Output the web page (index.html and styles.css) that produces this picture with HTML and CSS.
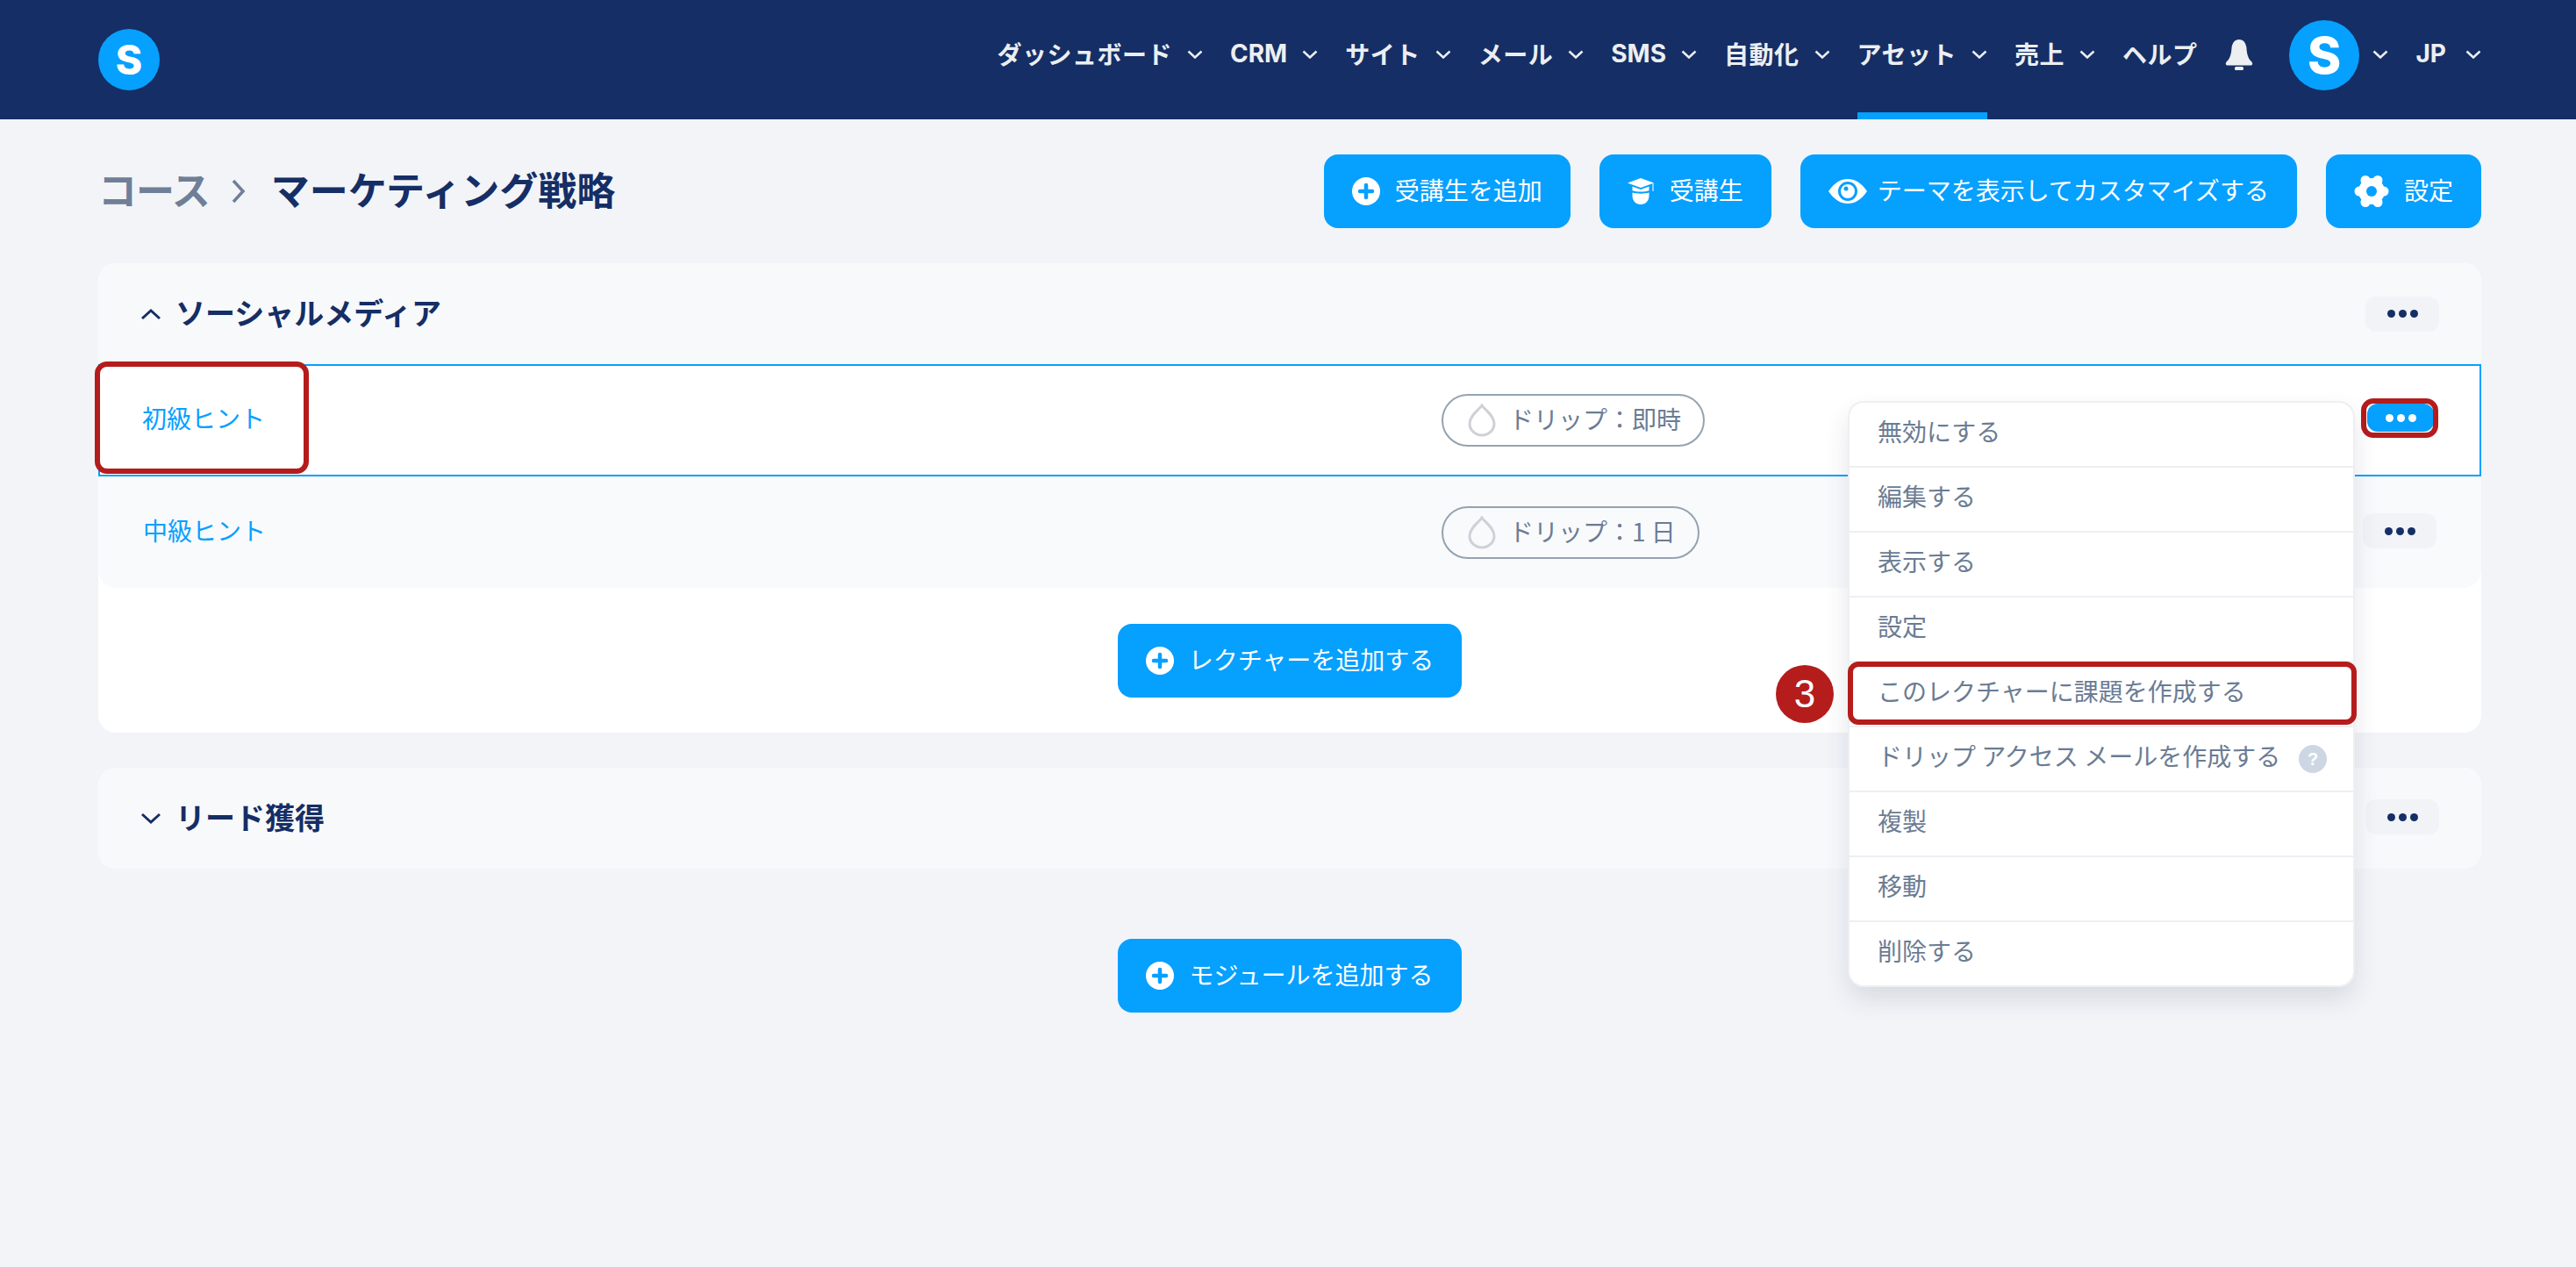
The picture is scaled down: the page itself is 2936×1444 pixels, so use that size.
FILE: index.html
```html
<!DOCTYPE html>
<html lang="ja">
<head>
  <meta charset="UTF-8">
  <title>マーケティング戦略</title>
  <link rel="stylesheet" href="styles.css">
</head>
<body>
  <!-- Top navigation -->
  <header class="topbar">
    <div class="logo">S</div>
    <nav class="nav">
      <a class="nav-item">ダッシュボード<svg class="chev" viewBox="0 0 18 10"><path d="M1.5 1.5 9 8.5l7.5-7"/></svg></a>
      <a class="nav-item nav-latin">CRM<svg class="chev" viewBox="0 0 18 10"><path d="M1.5 1.5 9 8.5l7.5-7"/></svg></a>
      <a class="nav-item">サイト<svg class="chev" viewBox="0 0 18 10"><path d="M1.5 1.5 9 8.5l7.5-7"/></svg></a>
      <a class="nav-item">メール<svg class="chev" viewBox="0 0 18 10"><path d="M1.5 1.5 9 8.5l7.5-7"/></svg></a>
      <a class="nav-item nav-latin">SMS<svg class="chev" viewBox="0 0 18 10"><path d="M1.5 1.5 9 8.5l7.5-7"/></svg></a>
      <a class="nav-item">自動化<svg class="chev" viewBox="0 0 18 10"><path d="M1.5 1.5 9 8.5l7.5-7"/></svg></a>
      <a class="nav-item active">アセット<svg class="chev" viewBox="0 0 18 10"><path d="M1.5 1.5 9 8.5l7.5-7"/></svg></a>
      <a class="nav-item">売上<svg class="chev" viewBox="0 0 18 10"><path d="M1.5 1.5 9 8.5l7.5-7"/></svg></a>
      <a class="nav-item">ヘルプ</a>
      <svg class="bell" viewBox="0 0 32 36"><path d="M16 0c-5 0-8 4-8.5 10-.4 7-2 12-5.5 15-2 1.7-1.5 4.5 1 4.5h26c2.500 0 3-2.800 1-4.500-3.500-3-5.100-8-5.500-15C24 4 21 0 16 0z"/><rect x="11" y="31" width="10" height="4" rx="1.5"/></svg>
      <a class="nav-item nav-user"><span class="avatar">S</span><svg class="chev" viewBox="0 0 18 10"><path d="M1.5 1.5 9 8.5l7.5-7"/></svg></a>
      <a class="nav-item nav-latin nav-lang">JP<svg class="chev" viewBox="0 0 18 10"><path d="M1.5 1.5 9 8.5l7.5-7"/></svg></a>
    </nav>
  </header>

  <main class="page">
    <div class="page-head">
      <div class="crumbs">
        <span class="crumb-parent">コース</span>
        <svg class="crumb-sep" viewBox="0 0 16 28"><path d="M2 2l11 12L2 26"/></svg>
        <span class="crumb-current">マーケティング戦略</span>
      </div>
      <div class="actions">
        <a class="btn"><svg class="btn-icon" viewBox="0 0 32 32"><circle cx="16" cy="16" r="16" fill="#fff"/><path d="M16 9v14M9 16h14" stroke="#06a0ff" stroke-width="4.5" stroke-linecap="round"/></svg><span class="label">受講生を追加</span></a>
        <a class="btn"><svg class="btn-icon btn-icon-cap" viewBox="0 0 30 30" fill="#fff"><path d="M15 0 30 5.5 15 11 0 5.5z"/><path d="M5.5 9.5 15 13l9.5-3.5v4.800c-5 1.700-14 1.700-19 0z"/><path d="M5.5 16.500c5 1.500 14 1.500 19 0v3.500c0 6-4 10-9.500 10s-9.500-4-9.500-10z"/><path d="M28.500 6h1v9h-1z"/></svg><span class="label">受講生</span></a>
        <a class="btn"><svg class="btn-icon btn-icon-eye" viewBox="0 0 44 32"><path d="M0 16C7 6 14 2 22 2s15 4 22 14c-7 10-14 14-22 14S7 26 0 16z" fill="#fff"/><circle cx="22" cy="16" r="9.5" fill="none" stroke="#06a0ff" stroke-width="3"/><circle cx="20" cy="13" r="2.5" fill="#06a0ff"/></svg><span class="label">テーマを表示してカスタマイズする</span></a>
        <a class="btn"><svg class="btn-icon btn-icon-gear" viewBox="0 0 40 38"><g fill="#fff"><circle cx="20" cy="19" r="15"/><circle cx="34" cy="19" r="5.5"/><circle cx="6" cy="19" r="5.5"/><circle cx="27" cy="6.500" r="5.5"/><circle cx="13" cy="6.500" r="5.5"/><circle cx="27" cy="31.500" r="5.5"/><circle cx="13" cy="31.500" r="5.5"/></g><circle cx="20" cy="19" r="6" fill="#06a0ff"/></svg><span class="label">設定</span></a>
      </div>
    </div>

    <!-- Module 1 -->
    <section class="module">
      <div class="module-head">
        <div class="module-title"><svg class="module-chev" viewBox="0 0 24 14"><path d="M2 12 12 3l10 9"/></svg><span class="label">ソーシャルメディア</span></div>
        <button class="dots"><i></i><i></i><i></i></button>
      </div>
      <div class="lecture lecture-open">
        <a class="lecture-name marked">初級ヒント</a>
        <div class="drip"><svg class="drip-icon" viewBox="0 0 32 38"><path d="M16 2C13 7 2 13 2 23a14 13 0 0 0 28 0C30 13 19 7 16 2z"/></svg><span class="label">ドリップ：即時</span></div>
        <button class="dots dots-active"><i></i><i></i><i></i></button>

        <!-- Opened lecture menu -->
        <ul class="menu">
          <li>無効にする</li>
          <li>編集する</li>
          <li>表示する</li>
          <li>設定</li>
          <li class="marked-item"><span class="step">3</span>このレクチャーに課題を作成する</li>
          <li>ドリップ アクセス メールを作成する<span class="help">?</span></li>
          <li>複製</li>
          <li>移動</li>
          <li>削除する</li>
        </ul>
      </div>
      <div class="lecture lecture-last">
        <a class="lecture-name">中級ヒント</a>
        <div class="drip"><svg class="drip-icon" viewBox="0 0 32 38"><path d="M16 2C13 7 2 13 2 23a14 13 0 0 0 28 0C30 13 19 7 16 2z"/></svg><span class="label">ドリップ：1 日</span></div>
        <button class="dots"><i></i><i></i><i></i></button>
      </div>
      <div class="module-foot">
        <a class="btn"><svg class="btn-icon" viewBox="0 0 32 32"><circle cx="16" cy="16" r="16" fill="#fff"/><path d="M16 9v14M9 16h14" stroke="#06a0ff" stroke-width="4.5" stroke-linecap="round"/></svg><span class="label">レクチャーを追加する</span></a>
      </div>
    </section>

    <!-- Module 2 -->
    <section class="module module-closed">
      <div class="module-head">
        <div class="module-title"><svg class="module-chev" viewBox="0 0 24 14"><path d="M2 2l10 9 10-9"/></svg><span class="label">リード獲得</span></div>
        <button class="dots"><i></i><i></i><i></i></button>
      </div>
    </section>

    <div class="page-foot">
      <a class="btn"><svg class="btn-icon" viewBox="0 0 32 32"><circle cx="16" cy="16" r="16" fill="#fff"/><path d="M16 9v14M9 16h14" stroke="#06a0ff" stroke-width="4.5" stroke-linecap="round"/></svg><span class="label">モジュールを追加する</span></a>
    </div>
  </main>
</body>
</html>
```

FILE: styles.css
```css
body {
  margin: 0;
  min-height: 1444px;
  background-color: #f2f4f8;
  color: #152e65;
  font-family: "Noto Sans CJK JP", "Noto Sans", sans-serif;
  font-size: 28px;
}

/* Noto sits low in its line box, this pulls the text back up */
.label {
  padding-bottom: 4px;
}

/* Top navigation */
.topbar {
  display: flex;
  justify-content: space-between;
  align-items: center;
  height: 136px;
  padding: 0 108px 0 112px;
  background-color: #152e65;
}

.logo {
  display: flex;
  justify-content: center;
  align-items: center;
  width: 70px;
  height: 70px;
  border-radius: 50%;
  background-color: #06a0ff;
  color: #fff;
  font-family: "Inter", sans-serif;
  font-size: 46px;
  font-weight: 800;
  line-height: 1;
}

.nav {
  display: flex;
  align-items: center;
  height: 100%;
  gap: 31px;
}

.nav-item {
  display: flex;
  align-items: center;
  gap: 17px;
  box-sizing: border-box;
  height: 100%;
  padding-bottom: 15px;
  color: #eceef2;
  font-weight: 700;
  letter-spacing: 0.5px;
  line-height: 1;
}

.nav-latin {
  font-family: "Inter", sans-serif;
  letter-spacing: 0;
}

.nav-lang {
  gap: 22px;
}

.nav-item.active {
  box-shadow: inset 0 -8px 0 #06a0ff;
}

.chev {
  width: 18px;
  height: 10px;
  margin-top: 3px;
  fill: none;
  stroke: #eceef2;
  stroke-width: 2.5;
}

.bell {
  width: 34px;
  height: 36px;
  margin-bottom: 10px;
  fill: #eceef2;
}

.nav-user {
  gap: 15px;
  margin-left: 9px;
}

.avatar {
  display: flex;
  justify-content: center;
  align-items: center;
  width: 80px;
  height: 80px;
  margin-top: 5px;
  border-radius: 50%;
  background-color: #06a0ff;
  color: #fff;
  font-family: "Inter", sans-serif;
  font-size: 58px;
  font-weight: 800;
}

/* Page */
.page {
  padding: 0 108px 0 112px;
}

.page-head {
  display: flex;
  justify-content: space-between;
  align-items: center;
  height: 84px;
  margin-top: 40px;
  margin-bottom: 40px;
}

.crumbs {
  display: flex;
  align-items: center;
  font-size: 44px;
  font-weight: 700;
  line-height: 1;
}

.crumb-parent,
.crumb-current {
  padding-bottom: 6px;
}

.crumb-parent {
  color: #6f7f97;
  letter-spacing: -1px;
}

.crumb-sep {
  width: 16px;
  height: 28px;
  margin: 0 29px 0 25px;
  fill: none;
  stroke: #6f7f97;
  stroke-width: 3.5;
}

.actions {
  display: flex;
  gap: 33px;
}

.btn {
  display: inline-flex;
  align-items: center;
  gap: 17px;
  box-sizing: border-box;
  height: 84px;
  padding: 0 32px;
  border-radius: 16px;
  background-color: #06a0ff;
  color: #fff;
  line-height: 1;
  white-space: nowrap;
}

.btn-icon {
  flex: none;
  width: 32px;
  height: 32px;
}

.btn-icon-cap {
  width: 30px;
  height: 30px;
  margin-right: 1px;
}

.btn-icon-eye {
  width: 44px;
  margin-right: -5px;
}

.btn-icon-gear {
  width: 40px;
  height: 38px;
}

/* Modules */
.module {
  margin-bottom: 40px;
  border-radius: 20px;
  background-color: #fff;
}

.module-head {
  display: flex;
  justify-content: space-between;
  align-items: center;
  height: 115px;
  padding: 0 48px;
  border-radius: 20px 20px 0 0;
  background-color: #f8f9fb;
}

.module-closed .module-head {
  border-radius: 20px;
}

.module-closed .dots {
  margin-bottom: 3px;
}

.module-title {
  display: flex;
  align-items: center;
  gap: 16px;
  font-size: 34px;
  font-weight: 700;
  line-height: 1;
}

.module-chev {
  width: 24px;
  height: 14px;
  fill: none;
  stroke: #152e65;
  stroke-width: 3;
}

.dots {
  display: flex;
  justify-content: center;
  align-items: center;
  gap: 4px;
  width: 84px;
  height: 40px;
  padding: 0;
  border: none;
  border-radius: 12px;
  background-color: #f1f3f7;
}

.dots i {
  width: 9px;
  height: 9px;
  border-radius: 50%;
  background-color: #152e65;
}

.dots-active {
  position: relative;
  width: 76px;
  height: 32px;
  margin-right: 4px;
  margin-bottom: 6px;
  background-color: #06a0ff;
}

.dots-active i {
  background-color: #fff;
}

/* Annotation around the three dots */
.dots-active::after {
  content: "";
  position: absolute;
  inset: -6px -5px -7px -7px;
  border: 6px solid #b51c1c;
  border-radius: 14px;
}

.lecture {
  position: relative;
  display: grid;
  grid-template-columns: 1481px 1fr auto;
  align-items: center;
  box-sizing: border-box;
  height: 128px;
  padding: 0 48px 0 48px;
  background-color: #f9fafc;
}

.lecture-open {
  border: 2px solid #06a0ff;
  background-color: #fff;
}

.lecture-last {
  height: 127px;
  padding-left: 51px;
  grid-template-columns: 1480px 1fr auto;
  border-radius: 0 0 20px 20px;
}

.lecture-last .dots {
  margin-right: 3px;
  margin-bottom: 3px;
}

.lecture-name {
  position: relative;
  padding-bottom: 6px;
  color: #06a0ff;
  line-height: 1;
}

/* Annotation around the first lecture name */
.marked::after {
  content: "";
  position: absolute;
  top: -50px;
  left: -54px;
  box-sizing: border-box;
  width: 244px;
  height: 128px;
  border: 6px solid #b51c1c;
  border-radius: 14px;
}

.drip {
  display: inline-flex;
  align-items: center;
  justify-self: start;
  gap: 15px;
  box-sizing: border-box;
  height: 60px;
  padding: 0 25px 0 28px;
  border: 2px solid #94a3b1;
  border-radius: 30px;
  color: #6b7c93;
  line-height: 1;
}

.drip-icon {
  width: 32px;
  height: 38px;
  fill: none;
  stroke: #cfd1d7;
  stroke-width: 3;
}

.module-foot {
  display: flex;
  justify-content: center;
  padding: 41px 0 40px;
}

.page-foot {
  display: flex;
  justify-content: center;
  margin-top: 80px;
}

/* Lecture menu */
.menu {
  position: absolute;
  top: 42px;
  right: 144px;
  z-index: 2;
  width: 574px;
  margin: 0;
  padding: 0;
  list-style: none;
  border-radius: 16px;
  background-color: #fff;
  box-shadow: 0 0 0 2px #eeeff3, 0 14px 30px rgba(40, 50, 80, 0.14);
  color: #6b7c93;
}

.menu li {
  position: relative;
  display: flex;
  align-items: center;
  justify-content: space-between;
  box-sizing: border-box;
  height: 74px;
  padding: 0 30px 9px 32px;
  border-bottom: 2px solid #eeeff3;
  line-height: 1;
}

.menu li:last-child {
  height: 72px;
  border-bottom: none;
}

.marked-item::after {
  content: "";
  position: absolute;
  top: -1px;
  left: -2px;
  right: -4px;
  bottom: 1px;
  border: 6px solid #b51c1c;
  border-radius: 12px;
}

.step {
  position: absolute;
  top: 3px;
  left: -84px;
  display: flex;
  justify-content: center;
  align-items: center;
  width: 66px;
  height: 66px;
  border-radius: 50%;
  background-color: #b51c1c;
  color: #fff;
  font-family: "Liberation Sans", sans-serif;
  font-size: 44px;
}

.help {
  display: flex;
  justify-content: center;
  align-items: center;
  width: 32px;
  height: 32px;
  margin-top: 8px;
  border-radius: 50%;
  background-color: #cdd7e3;
  color: #fff;
  font-family: "Liberation Sans", sans-serif;
  font-size: 20px;
  font-weight: 700;
}
```
